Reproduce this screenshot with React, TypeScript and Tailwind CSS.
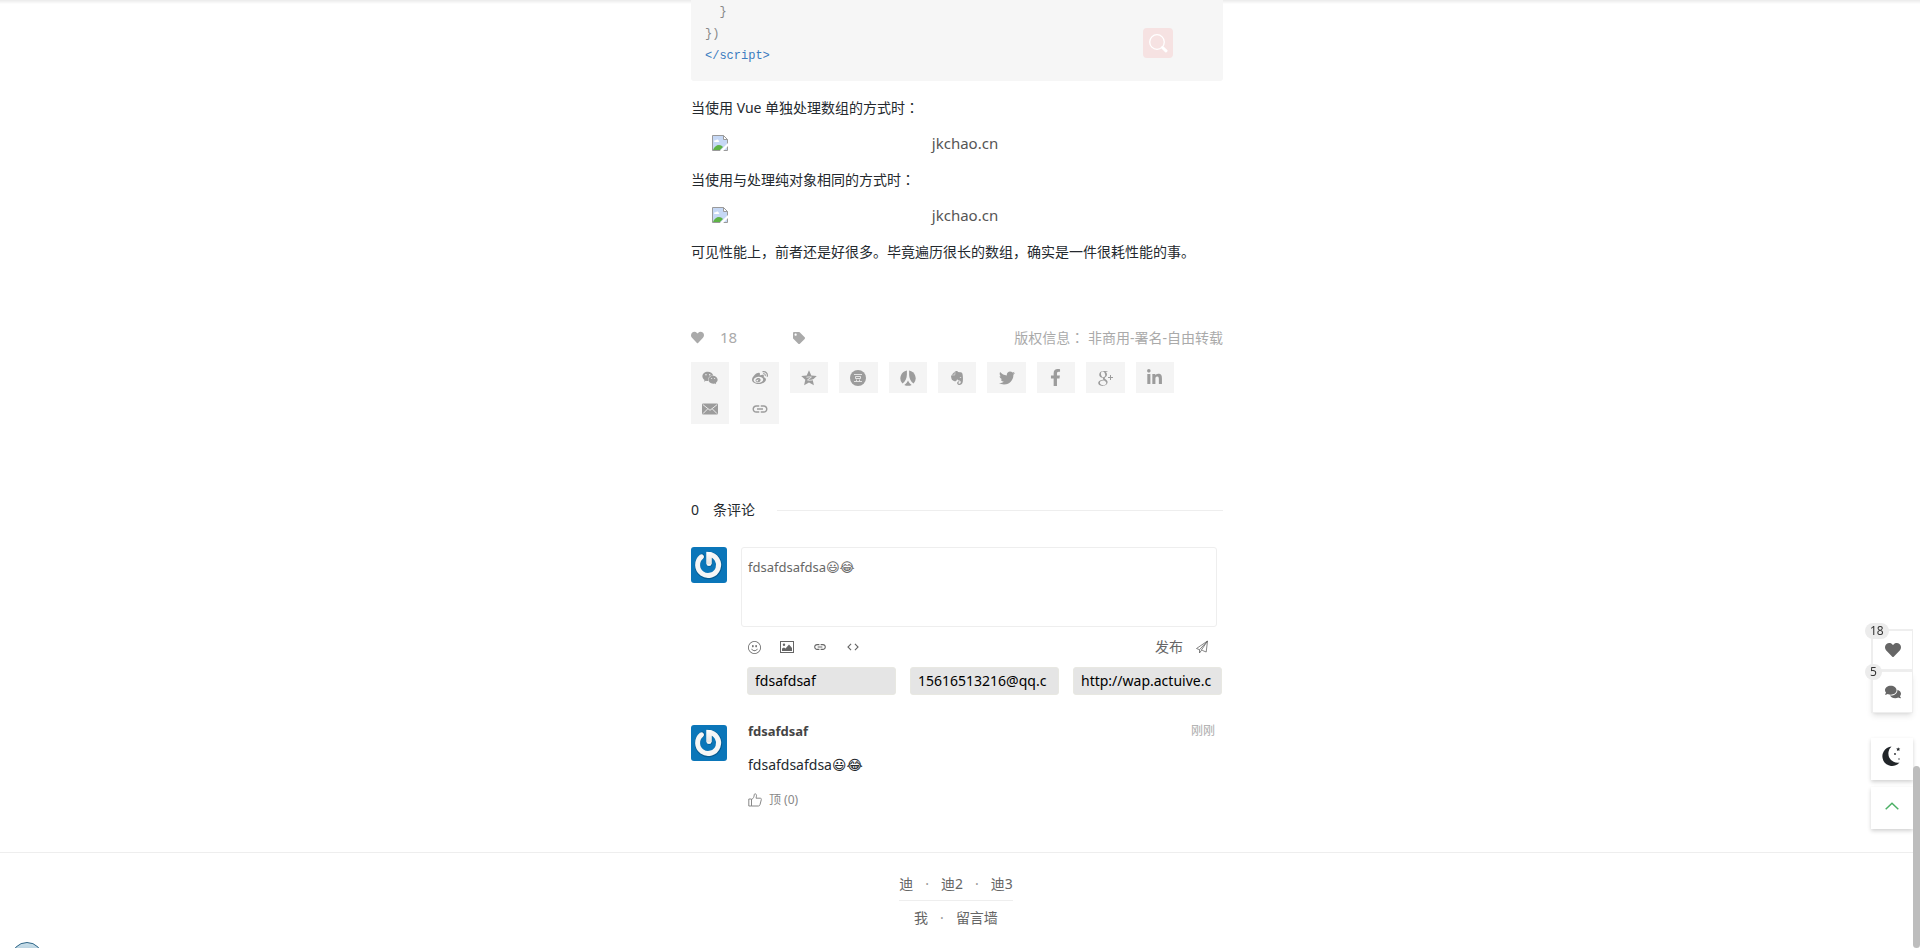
import type { ReactNode } from "react";
import {
  FaWeixin, FaWeibo, FaEvernote, FaTwitter, FaFacebookF, FaLinkedinIn,
  FaHeart, FaTag, FaComments,
} from "react-icons/fa";
import { MdLink, MdCode } from "react-icons/md";
import { TiSocialGooglePlus } from "react-icons/ti";
import { BsEmojiSmile } from "react-icons/bs";

const BrokenImageIcon = () => (
  <svg viewBox="0 0 16 16" className="size-4 shrink-0" aria-hidden="true">
    <path d="M.5.5h11l4 4v11H.5z" fill="#c6d8f5" stroke="#9a9a9a" />
    <path d="M11.5.5v4h4z" fill="#fff" stroke="#9a9a9a" />
    <path d="M2 6.5c0-1 1-1.6 1.8-1.2C4.500 4 6.500 4.300 6.500 5.600 7.500 5.600 7.500 7 6.500 7H3c-.6 0-1-.2-1-.5z" fill="#fff" />
    <path d="M1 15c1-3 3.500-5 6-5 1.500 0 3 .7 4 2l-3 3z" fill="#5fb346" />
    <path d="M8 15.800 16 8v3l-4.800 5H8z" fill="#fff" />
  </svg>
);

const QzoneIcon = () => (
  <svg viewBox="0 0 16 16" className="size-4" aria-hidden="true">
    <path fill="currentColor" d="m8 .3 2.300 5.100 5.500.6-4.100 3.700 1.200 5.600L8 12.500l-4.900 2.800 1.200-5.600L.2 6l5.500-.6z" />
    <path fill="none" stroke="#f4f4f4" strokeWidth=".8" d="M5.500 7.200c2-.4 3.500-.4 4.900-.1L6.500 9.900c2 .6 4 .5 6-.4" />
  </svg>
);

const DoubanIcon = () => (
  <svg viewBox="0 0 16 16" className="size-4" aria-hidden="true">
    <circle cx="8" cy="8" r="8" fill="currentColor" />
    <path fill="none" stroke="#f4f4f4" strokeWidth=".8" d="M4 4.500h8M5.500 6.500h5v2h-5zM6.500 9.500v1.500M9.500 9.500v1.500M4 11.500h8" />
  </svg>
);

const RenrenIcon = () => (
  <svg viewBox="0 0 16 16" className="size-4" fill="currentColor" aria-hidden="true">
    <path d="M6.900.4v4.200c0 4-1.700 7.200-4.500 9A8 8 0 0 1 6.900.4z" />
    <path d="M9.100.4v4.200c0 4 1.700 7.200 4.500 9A8 8 0 0 0 9.100.4z" />
    <path d="M8 10.500c.8 1.900 2 3.300 3.700 4.400a8 8 0 0 1-7.400 0C6 13.800 7.200 12.400 8 10.500z" />
  </svg>
);

const MailIcon = () => (
  <svg viewBox="0 0 16 12" className="h-3 w-4" aria-hidden="true">
    <rect y=".5" width="16" height="11" rx="1.200" fill="currentColor" />
    <path fill="none" stroke="#f4f4f4" strokeWidth=".9" d="m1 1.700 7 5.600 7-5.600M1 10.600l4.700-4.700M15 10.600l-4.700-4.700" />
  </svg>
);

const PictureIcon = () => (
  <svg viewBox="0 0 14 12" className="h-3 w-3.5" aria-hidden="true">
    <rect x=".5" y=".5" width="13" height="11" fill="none" stroke="currentColor" />
    <circle cx="4" cy="3.800" r="1.200" fill="currentColor" />
    <path fill="currentColor" d="M2 10V7.500l2-1 1.500 1L9 3.500l3 3.500v3z" />
  </svg>
);

const PlaneIcon = () => (
  <svg viewBox="0 0 14 14" className="size-3.5" fill="none" stroke="currentColor" strokeWidth=".8" strokeLinejoin="round" aria-hidden="true">
    <path d="M12.500 1 1.500 8.500l3 1.200L12.500 1l-1.300 11-3.700-1.500M4.500 9.700v3.300l1.900-2.600M12.500 1 6.300 10.200l1.200.3" />
  </svg>
);

const ThumbIcon = () => (
  <svg viewBox="0 0 14 14" className="size-3.5" fill="none" stroke="currentColor" strokeLinejoin="round" aria-hidden="true">
    <path d="M.8 6h2.700v7H.8zM3.500 6.500C5.500 5.500 6 4 6.300 1.500c.1-1 2-1 2.200.8.1 1-.3 2-.5 2.900h4.300c1 0 1.200.8 1 1.500l-1.300 5c-.2.800-.8 1.300-1.500 1.300h-7" />
  </svg>
);

const MoonIcon = () => (
  <svg viewBox="0 0 20 20" className="size-5" fill="#212529" aria-hidden="true">
    <path d="M9.500.6A9.700 9.700 0 1 0 17.500 16.500 9.200 9.200 0 0 1 9.500.6z" />
    <path d="m16.200 1.200.6 1.300 1.500.1-1.100 1 .3 1.500-1.300-.8-1.300.8.3-1.500-1.100-1 1.500-.1z" />
    <circle cx="13" cy="8" r=".9" />
    <circle cx="17" cy="13" r=".7" />
  </svg>
);

const Avatar = () => (
  <svg viewBox="0 0 36 36" className="size-9 shrink-0" role="img" aria-label="头像">
    <defs>
      <linearGradient id="ring" x1="0" y1="0" x2="0" y2="1">
        <stop offset="0" stopColor="#fff" />
        <stop offset="1" stopColor="#e4e4e4" />
      </linearGradient>
    </defs>
    <rect width="36" height="36" rx="3" fill="#0b76b9" />
    <g fill="none" strokeLinecap="round">
      <path d="M11 9.500A11 11 0 1 0 18.500 7.500V17" stroke="#075b91" strokeWidth="5.500" />
      <path d="M10.500 9.800A10.500 10.500 0 1 0 18 7.500V16.500" stroke="#f6f6f6" strokeWidth="5" />
    </g>
    <path d="M15.500 5h2.600a12.500 12.500 0 0 1 2.500.3v11.700h-5.100z" fill="url(#ring)" />
  </svg>
);

const shares: { label: string; icon: ReactNode }[] = [
  { label: "微信", icon: <FaWeixin /> },
  { label: "微博", icon: <FaWeibo /> },
  { label: "QQ空间", icon: <QzoneIcon /> },
  { label: "豆瓣", icon: <DoubanIcon /> },
  { label: "人人", icon: <RenrenIcon /> },
  { label: "印象笔记", icon: <FaEvernote /> },
  { label: "Twitter", icon: <FaTwitter /> },
  { label: "Facebook", icon: <FaFacebookF className="size-[17px]" /> },
  { label: "Google+", icon: <TiSocialGooglePlus className="size-6" /> },
  { label: "LinkedIn", icon: <FaLinkedinIn className="size-[17px]" /> },
  { label: "邮件", icon: <MailIcon /> },
  { label: "复制链接", icon: <MdLink className="size-[18px]" /> },
];

const tools: { label: string; icon: ReactNode }[] = [
  { label: "表情", icon: <BsEmojiSmile className="size-[13px]" /> },
  { label: "图片", icon: <PictureIcon /> },
  { label: "链接", icon: <MdLink /> },
  { label: "代码", icon: <MdCode /> },
];

const fields = [
  { label: "昵称", value: "fdsafdsaf" },
  { label: "邮箱", value: "15616513216@qq.c" },
  { label: "网址", value: "http://wap.actuive.c" },
];

/* Full-width colon centred in its em box */
const Colon = () => (
  <span className="font-['Noto_Sans_CJK_TC',sans-serif] leading-none" lang="zh-TW">：</span>
);

const MissingImage = () => (
  <div className="flex h-9 items-center px-[21px] pb-0.5 text-[15px] text-[#555]">
    <BrokenImageIcon />
    <span className="flex-1 text-center">jkchao.cn</span>
  </div>
);

const FooterLinks = ({ items }: { items: string[] }) => (
  <>
    {items.map((item, i) => (
      <span key={item}>
        {i > 0 && <span className="px-3 text-[#999]">·</span>}
        <a href="#">{item}</a>
      </span>
    ))}
  </>
);

export default function App() {
  return (
    <div className="min-h-screen overflow-hidden bg-white pr-1.5 font-['Noto_Sans','Noto_Sans_CJK_SC','DejaVu_Sans',sans-serif] text-sm text-[#24292e]">
      <div className="fixed inset-x-0 top-0 h-1 bg-linear-to-b from-black/8 to-transparent" />

      <main className="mx-auto w-full max-w-[532px]">
        <article>
          <div className="relative">
            <pre className="rounded-b-[3px] bg-[#f6f6f6] px-3.5 pt-px pb-3.5 font-['Liberation_Mono',monospace] text-xs leading-[22px] text-[#888]">
              {"  }\n})\n"}
              <span className="text-[#3b7cc0]">{"</script>"}</span>
            </pre>
            <button aria-label="搜索" className="absolute top-7 right-[50px] flex size-[30px] items-center justify-center rounded bg-[#f6e2e2] text-white">
              <svg viewBox="0 0 20 20" className="size-5" fill="none" stroke="currentColor" aria-hidden="true">
                <circle cx="9" cy="9" r="7.300" strokeWidth="1.300" />
                <path d="m14.500 14.500 3.500 3.300" strokeWidth="3" strokeLinecap="round" />
              </svg>
            </button>
          </div>
          <div className="mt-[9px] leading-9">
            <p>当使用 Vue 单独处理数组的方式时<Colon /></p>
            <MissingImage />
            <p>当使用与处理纯对象相同的方式时<Colon /></p>
            <MissingImage />
            <p>可见性能上，前者还是好很多。毕竟遍历很长的数组，确实是一件很耗性能的事。</p>
          </div>
        </article>

        <div className="mt-[54px] flex h-7 items-center text-[#aaa]">
          <button aria-label="喜欢" className="flex items-center gap-4 text-[15px]">
            <FaHeart className="size-[13px]" />18
          </button>
          <FaTag className="ml-14 size-3" />
          <span className="ml-auto">版权信息<Colon /> 非商用-署名-自由转载</span>
        </div>

        <div className="mt-2.5 grid grid-cols-10 gap-x-[11px] pr-[49px]">
          {shares.map((s) => (
            <a key={s.label} href="#" aria-label={s.label} className="flex h-[31px] items-center justify-center bg-[#f4f4f4] text-base text-[#9c9c9c]">
              {s.icon}
            </a>
          ))}
        </div>

        <section>
          <h2 className="mt-[72px] flex h-7 items-center gap-3.5">
            <span>0</span>
            <span>条评论</span>
            <span className="ml-2 h-px flex-1 bg-[#eee]" />
          </h2>

          <form className="mt-[23px] flex gap-3.5">
            <Avatar />
            <div className="min-w-0 flex-1">
              <div className="pr-1.5">
                <textarea
                  aria-label="评论内容"
                  defaultValue="fdsafdsafdsa😃😂"
                  className="block h-20 w-full resize-none rounded-[3px] border border-[#eee] px-1.5 py-[7px] text-[13px] leading-6 text-[#666] outline-none"
                />
              </div>
              <div className="flex h-10 items-center gap-[19px] pr-3.5 pl-1.5 text-sm text-[#666]">
                {tools.map((t) => (
                  <button key={t.label} type="button" aria-label={t.label} className="flex w-3.5 justify-center">
                    {t.icon}
                  </button>
                ))}
                <button type="submit" className="ml-auto flex items-center gap-3">
                  发布
                  <PlaneIcon />
                </button>
              </div>
              <div className="grid grid-cols-3 gap-3.5 pr-px pl-1.5">
                {fields.map((f) => (
                  <input
                    key={f.label}
                    aria-label={f.label}
                    defaultValue={f.value}
                    className="h-7 w-full min-w-0 rounded-[3px] border border-[#e8e8e2] bg-[#e5e5e5] px-[7px] pb-0.5 text-sm text-black outline-none"
                  />
                ))}
              </div>
            </div>
          </form>

          <div className="mt-[30px] flex gap-[21px]">
            <Avatar />
            <div className="flex-1 pr-2">
              <div className="flex items-center justify-between text-[13px] leading-3">
                <b className="text-[#444]">fdsafdsaf</b>
                <span className="text-xs leading-3 text-[#aaa]">刚刚</span>
              </div>
              <p className="mt-3.5 leading-7">fdsafdsafdsa😃😂</p>
              <button className="mt-[11px] flex h-5 items-center gap-[7px] text-xs text-[#888]">
                <ThumbIcon />
                顶 (0)
              </button>
            </div>
          </div>
        </section>
      </main>

      <footer className="-mr-1.5 mt-[42px] flex flex-col items-center border-t border-[#eee] pt-4 pr-2 text-[#666]">
        <nav className="h-8 border-b border-[#eee] leading-[30px]">
          <FooterLinks items={["迪", "迪2", "迪3"]} />
        </nav>
        <nav className="leading-[34px]">
          <FooterLinks items={["我", "留言墙"]} />
        </nav>
      </footer>

      <aside className="fixed right-[7px] bottom-[119px] flex w-[42px] flex-col text-[#666]">
        <button aria-label="喜欢" className="relative flex h-[42px] items-center justify-center border-2 border-r border-[#eee] bg-white">
          <FaHeart className="size-4" />
          <span className="absolute -top-2 -left-2 rounded-full bg-[#ececec] px-[5px] text-xs leading-4 text-[#333]">18</span>
        </button>
        <button aria-label="评论" className="relative flex h-[42px] items-center justify-center border border-l-2 border-[#eee] bg-white shadow-md">
          <FaComments className="size-4" />
          <span className="absolute -top-2 -left-2 rounded-full bg-[#ececec] px-[5px] text-xs leading-4 text-[#333]">5</span>
        </button>
        <button aria-label="夜间模式" className="mt-[25px] flex h-[42px] items-center justify-center bg-white pb-1.5 shadow-[0_2px_4px_rgba(0,0,0,0.18)]">
          <MoonIcon />
        </button>
        <button aria-label="回到顶部" className="mt-[7px] flex h-[42px] items-center justify-center bg-white pb-1 text-[#4bb065] shadow-[0_2px_4px_rgba(0,0,0,0.18)]">
          <svg viewBox="0 0 14 8" className="h-2 w-3.5" fill="none" stroke="currentColor" strokeWidth="1.500" aria-hidden="true">
            <path d="m.7 7.300 6.300-6 6.300 6" />
          </svg>
        </button>
      </aside>

      <div className="fixed right-0 bottom-0 h-[182px] w-[7px] rounded-full bg-[#bdbdbd]" />
      <div className="fixed -bottom-[26px] left-[11px] size-8 rounded-full border border-[#2d6587] bg-linear-to-b from-[#c9dfea] to-[#7fa3bc]" />
    </div>
  );
}
